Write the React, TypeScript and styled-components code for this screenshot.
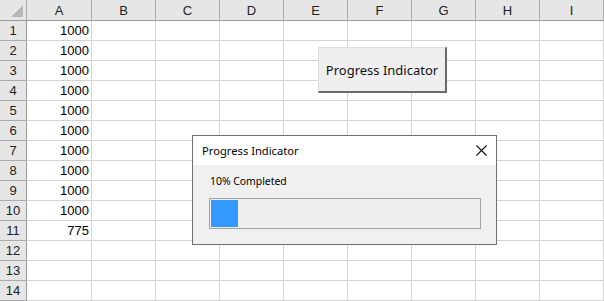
import React from "react";
import styled, { createGlobalStyle } from "styled-components";

const Global = createGlobalStyle`
  html, body { margin: 0; padding: 0; background: #ffffff; overflow: hidden; }
  * { box-sizing: border-box; }
`;

const Sheet = styled.div`
  position: relative;
  width: 604px;
  height: 301px;
  display: grid;
  grid-template-columns: 27px 65px repeat(8, 64px);
  grid-template-rows: 21px repeat(14, 20px);
  font-family: "Liberation Sans", Arial, sans-serif;
  font-size: 13px;
  color: #000;
`;

const Corner = styled.div`
  position: relative;
  background: #e6e6e6;
  border-right: 1px solid #ababab;
  border-bottom: 1px solid #9b9b9b;
  &::after {
    content: "";
    position: absolute;
    right: 3px;
    bottom: 3px;
    width: 0;
    height: 0;
    border-left: 12px solid transparent;
    border-bottom: 12px solid #b8b8b8;
  }
`;

const ColHeader = styled.div`
  background: #e6e6e6;
  border-right: 1px solid #ababab;
  border-bottom: 1px solid #9b9b9b;
  display: flex;
  align-items: center;
  justify-content: center;
  color: #222;
  padding-top: 1px;
`;

const RowHeader = styled.div`
  background: #e6e6e6;
  border-right: 1px solid #9b9b9b;
  border-bottom: 1px solid #ababab;
  display: flex;
  align-items: center;
  justify-content: center;
  color: #222;
`;

const Cell = styled.div<{ $num?: boolean }>`
  border-right: 1px solid #d4d4d4;
  border-bottom: 1px solid #d4d4d4;
  display: flex;
  align-items: flex-end;
  justify-content: ${(p) => (p.$num ? "flex-end" : "flex-start")};
  padding: 0 2px 2px 2px;
  line-height: 15px;
`;

const MacroButton = styled.button`
  position: absolute;
  left: 318px;
  top: 47px;
  width: 129px;
  height: 46px;
  background: #efefef;
  border-top: 1px solid #dcdcdc;
  border-left: 1px solid #dcdcdc;
  border-right: 2px solid #6a6a6a;
  border-bottom: 2px solid #6a6a6a;
  font-family: "Noto Sans", "Open Sans", sans-serif;
  font-size: 13px;
  color: #111;
  padding: 0;
  display: flex;
  align-items: center;
  justify-content: center;
`;

const Dialog = styled.div`
  position: absolute;
  left: 192px;
  top: 135px;
  width: 305px;
  height: 110px;
  border: 1px solid #707070;
  background: #f0f0f0;
  display: flex;
  flex-direction: column;
  font-family: "Noto Sans", "Open Sans", sans-serif;
  color: #000;
`;

const TitleBar = styled.div`
  height: 29px;
  background: #ffffff;
  display: flex;
  align-items: center;
  justify-content: space-between;
  padding: 0 9px 0 9px;
`;

const Title = styled.span`
  font-size: 11.2px;
`;

const Body = styled.div`
  flex: 1;
  display: flex;
  flex-direction: column;
  padding: 8px 15px 0 17px;
`;

const Label = styled.div`
  font-size: 10.4px;
  line-height: 16px;
  height: 16px;
`;

const Track = styled.div`
  margin-top: 9px;
  margin-left: -1px;
  width: 272px;
  height: 31px;
  border: 1px solid #a3a3a3;
  background: #efefef;
  padding: 1px;
  display: flex;
`;

const Fill = styled.div`
  height: 100%;
  background: #3399ff;
`;

const CloseIcon = () => (
  <svg width="11" height="11" viewBox="0 0 11 11" style={{ display: "block" }}>
    <path d="M0.5 0.5 L10.5 10.5 M10.5 0.5 L0.5 10.5" stroke="#111" strokeWidth="1.1" />
  </svg>
);

const cols = ["A", "B", "C", "D", "E", "F", "G", "H", "I"];
const colA: Record<number, string> = {
  1: "1000", 2: "1000", 3: "1000", 4: "1000", 5: "1000",
  6: "1000", 7: "1000", 8: "1000", 9: "1000", 10: "1000", 11: "775",
};

export default function App() {
  const progress = 10;
  const rows = Array.from({ length: 14 }, (_, i) => i + 1);
  return (
    <>
      <Global />
      <Sheet>
        <Corner />
        {cols.map((c) => (
          <ColHeader key={c}>{c}</ColHeader>
        ))}
        {rows.map((r) => (
          <React.Fragment key={r}>
            <RowHeader>{r}</RowHeader>
            {cols.map((c) => (
              <Cell key={c} $num={c === "A"}>
                {c === "A" ? colA[r] ?? "" : ""}
              </Cell>
            ))}
          </React.Fragment>
        ))}
        <MacroButton>Progress Indicator</MacroButton>
        <Dialog>
          <TitleBar>
            <Title>Progress Indicator</Title>
            <CloseIcon />
          </TitleBar>
          <Body>
            <Label>{progress}% Completed</Label>
            <Track>
              <Fill style={{ width: `${progress}%` }} />
            </Track>
          </Body>
        </Dialog>
      </Sheet>
    </>
  );
}
